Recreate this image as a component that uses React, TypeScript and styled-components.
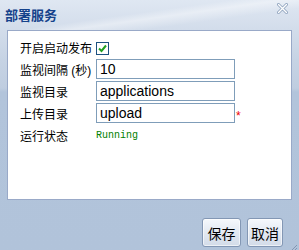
import React from 'react'
import styled, { createGlobalStyle } from 'styled-components'

const GlobalStyle = createGlobalStyle`
  html, body {
    margin: 0;
    padding: 0;
  }
  body {
    font-family: "Liberation Sans", "Noto Sans CJK SC", sans-serif;
  }
`

const Window = styled.div`
  position: relative;
  width: 299px;
  height: 250px;
  box-sizing: border-box;
  display: flex;
  flex-direction: column;
  background: linear-gradient(180deg, #dfe7f2 0px, #d3ddeb 28px, #c6d3e4 60px, #bfcde0 88px, #b2c4db 92px, #b1c3da 100%);
  overflow: hidden;
`

const Shine = styled.div`
  position: absolute;
  inset: 0 0 auto 0;
  height: 30px;
  background: linear-gradient(172deg, rgba(255, 255, 255, 0) 0%, rgba(255, 255, 255, 0) 45%, rgba(255, 255, 255, 0.4) 55%, rgba(255, 255, 255, 0) 70%);
  pointer-events: none;
`

const Header = styled.div`
  position: relative;
  height: 30px;
  flex: none;
  display: flex;
  align-items: center;
  justify-content: space-between;
  padding: 0 11px 0 5px;
  box-sizing: border-box;
`

const Title = styled.div`
  font-size: 13px;
  font-weight: bold;
  color: #15428b;
  margin-top: -2px;
`

const Close = styled.div`
  width: 11px;
  height: 11px;
  margin-top: -13px;
  display: flex;
  align-items: center;
  justify-content: center;
`

const Body = styled.div`
  margin: 0 7px;
  height: 170px;
  flex: none;
  box-sizing: border-box;
  background: #fff;
  border: 1px solid #99a9c8;
  padding: 6px 12px 0 12px;
`

const Form = styled.div`
  display: grid;
  grid-template-columns: 76px auto;
  grid-auto-rows: 20px;
  row-gap: 2px;
  align-items: center;
`

const Label = styled.div`
  font-size: 12px;
  color: #000;
  white-space: nowrap;
`

const Field = styled.div`
  display: flex;
  align-items: center;
`

const Input = styled.input`
  width: 139px;
  height: 20px;
  box-sizing: border-box;
  border: 1px solid #7f9db9;
  padding: 0 3px;
  font-family: "Liberation Sans", sans-serif;
  font-size: 14px;
  color: #000;
  outline: none;
`

const Required = styled.span`
  color: #e00;
  font-size: 12px;
  margin: 6px 0 0 1px;
`

const Check = styled.span`
  width: 13px;
  height: 13px;
  box-sizing: border-box;
  border: 1px solid #1c5180;
  background: #fff;
  margin-top: 3px;
  display: flex;
  align-items: center;
  justify-content: center;
`

const Status = styled.span`
  font-family: "Liberation Mono", monospace;
  font-size: 10px;
  color: #008000;
`

const Footer = styled.div`
  flex: 1;
  display: flex;
  justify-content: flex-end;
  align-items: flex-start;
  gap: 6px;
  padding: 18px 16px 0 0;
`

const Button = styled.button`
  height: 29px;
  width: ${({ $w }: { $w: number }) => $w}px;
  padding: 0;
  border: 1px solid #8397b4;
  border-radius: 3px;
  background: linear-gradient(180deg, #f5f8fc 0%, #e3e9f2 50%, #d2dbe8 100%);
  box-shadow: inset 0 0 0 1px rgba(255, 255, 255, 0.6);
  font-family: "Liberation Sans", "Noto Sans CJK SC", sans-serif;
  font-size: 14px;
  color: #000;
`

const Grip = styled.div`
  position: absolute;
  right: 1px;
  bottom: 1px;
  width: 10px;
  height: 10px;
`

const App = () => {
  return (
    <>
      <GlobalStyle />
      <Window>
        <Shine />
        <Header>
          <Title>部署服务</Title>
          <Close>
            <svg width="11" height="11" viewBox="0 0 11 11">
              <path d="M1.5 1.5 L9.5 9.5 M9.5 1.5 L1.5 9.5" stroke="#8ea2bd" strokeWidth="3" strokeLinecap="round" />
              <path d="M1.5 1.5 L9.5 9.5 M9.5 1.5 L1.5 9.5" stroke="#fff" strokeWidth="1.4" strokeLinecap="round" />
            </svg>
          </Close>
        </Header>
        <Body>
          <Form>
            <Label>开启启动发布</Label>
            <Field>
              <Check>
                <svg width="9" height="9" viewBox="0 0 9 9">
                  <path d="M1 4.5 L3.5 7 L8 1.5" stroke="#21a121" strokeWidth="2" fill="none" />
                </svg>
              </Check>
            </Field>
            <Label>监视间隔 (秒)</Label>
            <Field>
              <Input defaultValue="10" />
            </Field>
            <Label>监视目录</Label>
            <Field>
              <Input defaultValue="applications" />
            </Field>
            <Label>上传目录</Label>
            <Field>
              <Input defaultValue="upload" />
              <Required>*</Required>
            </Field>
            <Label>运行状态</Label>
            <Field>
              <Status>Running</Status>
            </Field>
          </Form>
        </Body>
        <Footer>
          <Button $w={39}>保存</Button>
          <Button $w={36}>取消</Button>
        </Footer>
        <Grip>
          <svg width="10" height="10" viewBox="0 0 10 10">
            <path d="M9 2 L2 9 M9 5 L5 9 M9 8 L8 9" stroke="#8396b2" strokeWidth="1" />
          </svg>
        </Grip>
      </Window>
    </>
  )
}

export default App
